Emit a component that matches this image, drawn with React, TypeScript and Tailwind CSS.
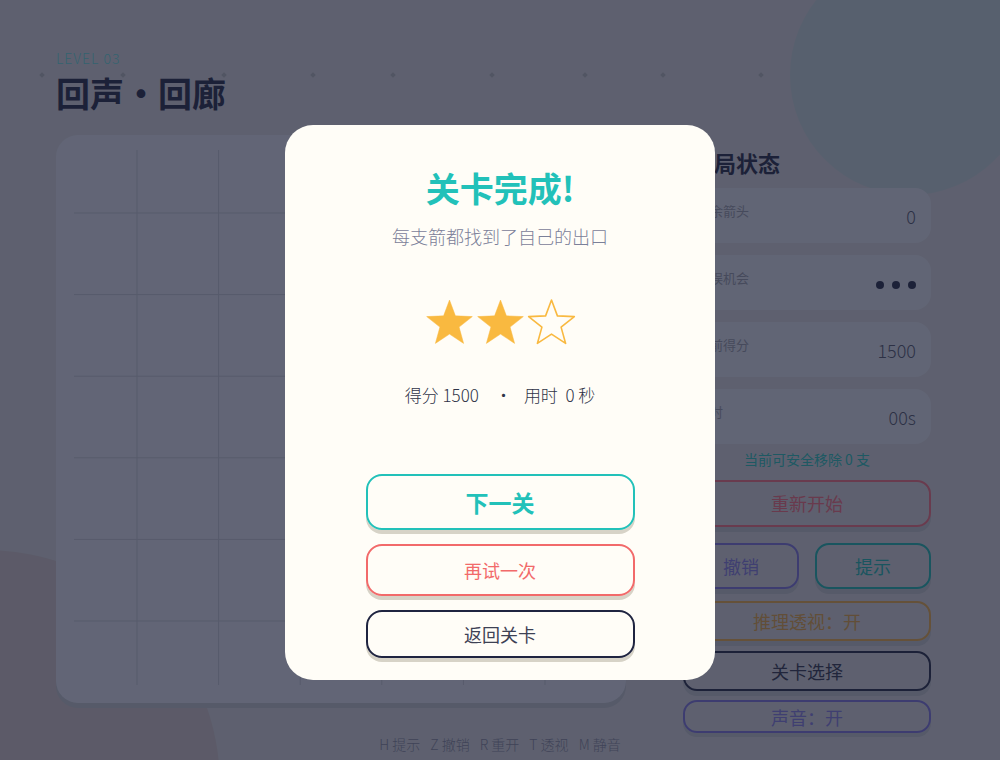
import React from "react";

const FONT = "font-['Noto_Sans_CJK_SC','Noto_Sans',sans-serif]";

const DOTS = [42, 123, 224, 313, 393, 492, 585, 663, 761];
const GRID = [63, 144.6, 226.2, 307.8, 389.4, 471];

function Star({ filled }: { filled: boolean }) {
  const R = 24;
  const r = R * 0.42;
  const cx = 24.5;
  const cy = 25;
  const pts: string[] = [];
  for (let i = 0; i < 10; i++) {
    const a = ((-90 + i * 36) * Math.PI) / 180;
    const rad = i % 2 === 0 ? R : r;
    pts.push(`${(cx + rad * Math.cos(a)).toFixed(2)},${(cy + rad * Math.sin(a)).toFixed(2)}`);
  }
  return (
    <svg width="49" height="47" viewBox="0 0 49 47">
      <polygon
        points={pts.join(" ")}
        fill={filled ? "#f9b940" : "none"}
        stroke="#f9b940"
        strokeWidth={filled ? 0.5 : 1.6}
        strokeLinejoin="round"
      />
    </svg>
  );
}

function StatCard({ label, children }: { label: string; children: React.ReactNode }) {
  return (
    <div className="flex h-[55px] justify-between rounded-[16px] bg-[#d3d5e0] pl-[14px] pr-[15px]">
      <span className="pt-[14px] text-[13px] leading-[18px] text-[#8d8f9d]">{label}</span>
      <div className="flex items-center pt-[2px] text-[18px] font-light text-[#4a4d63]">{children}</div>
    </div>
  );
}

function Board() {
  return (
    <div className="h-[568px] w-[570px] shrink-0 rounded-[22px] bg-[#d4d6e2] pl-[18px] pt-[15px] shadow-[0_5px_0_#b5b7bf]">
      <svg width="534" height="535" viewBox="0 0 534 535">
        {GRID.map((g) => (
          <g key={g} stroke="#b7b9c5" strokeWidth="1">
            <line x1={g} y1="0" x2={g} y2="535" />
            <line x1="0" y1={g} x2="534" y2={g} />
          </g>
        ))}
      </svg>
    </div>
  );
}

function SidePanel() {
  return (
    <div className="flex w-[248px] flex-col">
      <h2 className="mt-[12px] pl-[9px] text-[22px] font-bold leading-[30px] text-[#1f2440]">本局状态</h2>
      <div className="mt-[11px] flex flex-col gap-[12px]">
        <StatCard label="剩余箭头">0</StatCard>
        <StatCard label="失误机会">
          <div className="flex gap-[8px] pt-[2px]">
            <span className="size-[8px] rounded-full bg-[#1f2440]" />
            <span className="size-[8px] rounded-full bg-[#1f2440]" />
            <span className="size-[8px] rounded-full bg-[#1f2440]" />
          </div>
        </StatCard>
        <StatCard label="当前得分">1500</StatCard>
        <StatCard label="用时">00s</StatCard>
      </div>
      <p className="mt-[5px] text-center text-[14px] leading-[20px] text-[#22b5b0]">当前可安全移除 0 支</p>
      <button className="mt-[11px] h-[47px] rounded-[14px] border-2 border-[#e8687a] text-[18px] text-[#e66576] shadow-[0_5px_0_#b5b7bf]">
        重新开始
      </button>
      <div className="mt-[16px] flex gap-[16px]">
        <button className="h-[46px] flex-1 rounded-[14px] border-2 border-[#746bd2] text-[18px] text-[#7a72d4] shadow-[0_5px_0_#b5b7bf]">
          撤销
        </button>
        <button className="h-[46px] flex-1 rounded-[14px] border-2 border-[#17aaa5] text-[18px] text-[#17aaa5] shadow-[0_5px_0_#b5b7bf]">
          提示
        </button>
      </div>
      <button className="mt-[12px] h-[40px] rounded-[14px] border-2 border-[#dca043] text-[18px] text-[#d49a40] shadow-[0_5px_0_#b5b7bf]">
        推理透视：开
      </button>
      <button className="mt-[10px] h-[40px] rounded-[14px] border-2 border-[#1f2440] text-[18px] text-[#2a2f48] shadow-[0_5px_0_#b5b7bf]">
        关卡选择
      </button>
      <button className="mt-[9px] h-[33px] rounded-[14px] border-2 border-[#746bd2] text-[18px] leading-[20px] text-[#7a72d4] shadow-[0_4px_0_#b5b7bf]">
        声音：开
      </button>
    </div>
  );
}

function CompleteModal() {
  return (
    <div className="fixed inset-0 flex justify-center bg-[#1c2034]/[0.62] pt-[125px]">
      <div className="flex h-[555px] w-[430px] flex-col items-center rounded-[28px] bg-[#fffdf7] pt-[43px]">
        <h2 className="text-[34px] font-bold leading-[40px] text-[#22c1b9]">关卡完成!</h2>
        <p className="mt-[16px] text-[18px] font-light leading-[24px] text-[#7b8099]">每支箭都找到了自己的出口</p>
        <div className="mt-[51px] flex gap-[2px]">
          <Star filled />
          <Star filled />
          <Star filled={false} />
        </div>
        <p className="mt-[37px] flex items-center text-[17px] font-light leading-[24px] text-[#2f3448]">
          <span>得分 1500</span>
          <span className="ml-[16px] mr-[12px]">·</span>
          <span>用时&nbsp; 0&nbsp;秒</span>
        </p>
        <button className="mt-[67px] h-[56px] w-[269px] rounded-[16px] border-2 border-[#22c1b9] text-[23px] font-bold text-[#22c1b9] shadow-[0_4px_0_#d7d3c7]">
          下一关
        </button>
        <button className="mt-[14px] h-[52px] w-[269px] rounded-[16px] border-2 border-[#f26a6a] text-[18px] text-[#f26a6a] shadow-[0_4px_0_#d7d3c7]">
          再试一次
        </button>
        <button className="mt-[14px] h-[48px] w-[269px] rounded-[16px] border-2 border-[#1f2440] text-[18px] text-[#3d4154] shadow-[0_4px_0_#d7d3c7]">
          返回关卡
        </button>
      </div>
    </div>
  );
}

export default function App() {
  return (
    <div className={`relative min-h-[760px] w-full overflow-hidden bg-[#cac9cf] ${FONT}`}>
      {/* background decoration */}
      <div className="pointer-events-none absolute left-[790px] top-[-45px] size-[240px] rounded-full bg-[#b9c8cd]" />
      <div className="pointer-events-none absolute left-[-250px] top-[550px] size-[470px] rounded-full bg-[#c4b9bd]" />
      {DOTS.map((x) => (
        <span
          key={x}
          className="pointer-events-none absolute top-[73px] size-[4px] rotate-45 bg-[#a9aab0]"
          style={{ left: x - 2 }}
        />
      ))}

      <div className="relative px-[56px] pt-[50px]">
        <p className="text-[14px] font-light leading-[16px] tracking-[1px] text-[#5ccfcf]">LEVEL 03</p>
        <h1 className="mt-[7px] flex text-[34px] font-bold leading-[40px] text-[#1f2440]">
          <span>回声</span>
          <span className="w-[34px] text-center">•</span>
          <span>回廊</span>
        </h1>
        <div className="mt-[22px] flex gap-[57px]">
          <Board />
          <SidePanel />
        </div>
      </div>
      <p className="relative mt-[1px] flex justify-center gap-[10px] text-[14px] font-light leading-[20px] text-[#7b7c93]">
        <span>H 提示</span>
        <span>Z 撤销</span>
        <span>R 重开</span>
        <span>T 透视</span>
        <span>M 静音</span>
      </p>

      <CompleteModal />
    </div>
  );
}
